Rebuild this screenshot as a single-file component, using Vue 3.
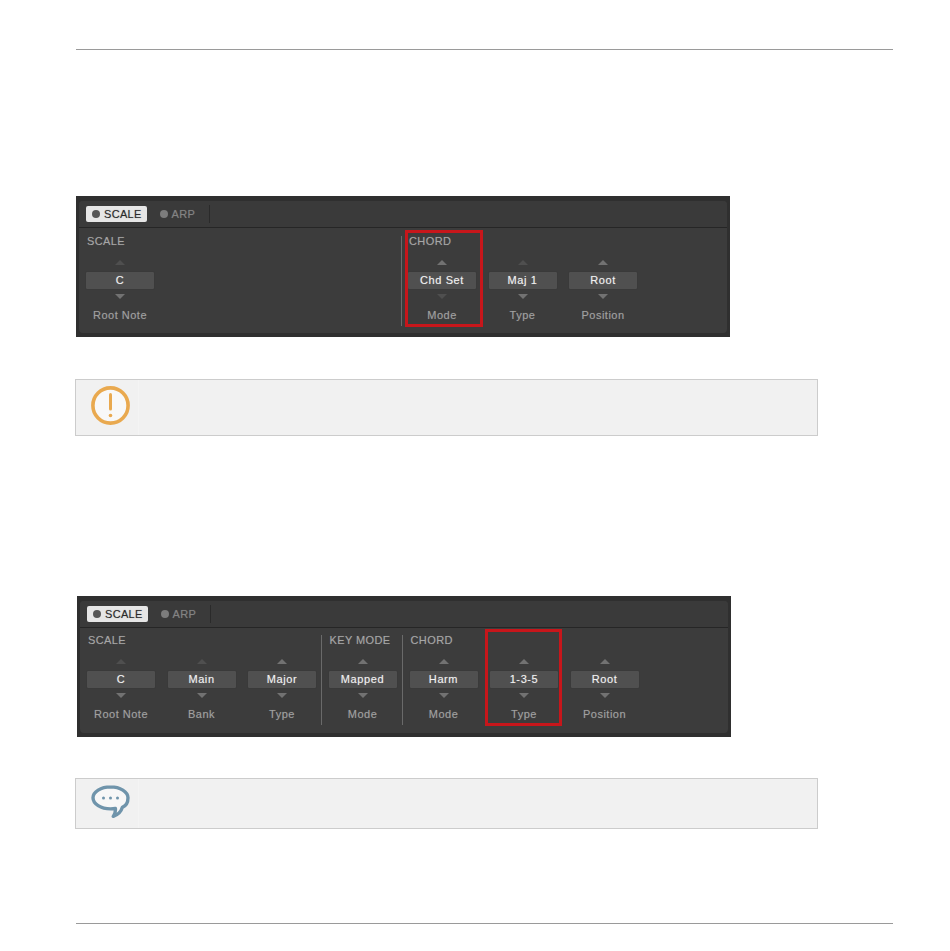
<template>
  <main class="page">
    <div class="rule"></div>

    <template v-for="(panel, i) in panels" :key="i">
      <section class="panel" :class="'panel-' + (i + 1)">
        <div class="panel-inner">
          <header class="tabs">
            <div class="tab active"><span class="dot"></span>SCALE</div>
            <div class="tab"><span class="dot"></span>ARP</div>
            <span class="tab-sep"></span>
          </header>
          <div class="groups">
            <div
              v-for="group in panel.groups"
              :key="group.title"
              class="group"
              :class="{ first: group.first }"
            >
              <h3 class="group-title">{{ group.title }}</h3>
              <div class="controls" :style="{ gridTemplateColumns: `repeat(${group.cols}, 68px)` }">
                <div v-for="c in group.controls" :key="c.label" class="control">
                  <span class="arrow up" :class="{ dim: c.dimUp }"></span>
                  <div class="value">{{ c.value }}</div>
                  <span class="arrow down" :class="{ dim: c.dimDown }"></span>
                  <div class="label">{{ c.label }}</div>
                </div>
              </div>
            </div>
          </div>
        </div>
        <div class="highlight"></div>
      </section>

      <aside class="note" :class="'note-' + (i + 1)">
        <div class="note-icon">
          <svg v-if="i === 0" width="39" height="39" viewBox="0 0 39 39">
            <circle cx="19.5" cy="19.5" r="17.6" fill="#f8f8f8" stroke="#e9a94f" stroke-width="3.6" />
            <path d="M19.5 8.5V23" fill="none" stroke="#e9a94f" stroke-width="3" stroke-linecap="round" />
            <circle cx="19.5" cy="29.5" r="1.8" fill="#e9a94f" />
          </svg>
          <svg v-else width="39" height="33" viewBox="0 0 39 33">
            <path
              d="M19.5 1.900C9.900 1.900 2 6.800 2 12.800c0 6.100 7.900 11.100 17.500 11.100 1.800 0 3.300-.1 4.900-.4.300 2.400-.4 5.100-2.100 7.800 4.700-1.600 7.800-4.400 9-8.900C36 20.500 37 16.800 37 12.800 37 6.800 29.100 1.900 19.500 1.900Z"
              fill="#f7f7f7"
              stroke="#6f94ab"
              stroke-width="3.4"
              stroke-linejoin="round"
            />
            <circle cx="12.500" cy="13" r="1.500" fill="#6f94ab" />
            <circle cx="19.500" cy="13" r="1.500" fill="#6f94ab" />
            <circle cx="26.500" cy="13" r="1.500" fill="#6f94ab" />
          </svg>
        </div>
      </aside>
    </template>

    <div class="rule rule-bottom"></div>
  </main>
</template>

<script setup>
const panels = [
  {
    groups: [
      {
        title: 'SCALE', cols: 4, first: true,
        controls: [{ value: 'C', label: 'Root Note', dimUp: true }]
      },
      {
        title: 'CHORD', cols: 3,
        controls: [
          { value: 'Chd Set', label: 'Mode', dimDown: true },
          { value: 'Maj 1', label: 'Type', dimUp: true },
          { value: 'Root', label: 'Position' }
        ]
      }
    ]
  },
  {
    groups: [
      {
        title: 'SCALE', cols: 3, first: true,
        controls: [
          { value: 'C', label: 'Root Note', dimUp: true },
          { value: 'Main', label: 'Bank', dimUp: true },
          { value: 'Major', label: 'Type' }
        ]
      },
      {
        title: 'KEY MODE', cols: 1,
        controls: [{ value: 'Mapped', label: 'Mode' }]
      },
      {
        title: 'CHORD', cols: 3,
        controls: [
          { value: 'Harm', label: 'Mode' },
          { value: '1-3-5', label: 'Type' },
          { value: 'Root', label: 'Position' }
        ]
      }
    ]
  }
]
</script>

<style scoped>
.page {
  width: 950px;
  height: 951px;
  box-sizing: border-box;
  padding: 49px 0 0 76px;
  font-family: "Liberation Sans", Arial, sans-serif;
  background: #fff;
}
.rule { width: 817px; height: 1px; background: #9a9a9a; }
.rule-bottom { margin-top: 94px; }

.panel {
  position: relative;
  width: 654px;
  height: 141px;
  box-sizing: border-box;
  margin-top: 146px;
  padding: 5px 3px 4px;
  background: #2f2f2f;
}
.panel-2 { margin-top: 160px; margin-left: 1px; }

.panel-inner {
  height: 100%;
  background: #3c3c3c;
  border-radius: 4px;
}
.tabs {
  display: flex;
  align-items: center;
  height: 27px;
  box-sizing: border-box;
  padding-left: 7px;
  padding-bottom: 1px;
  background: #3a3a3a;
  border-bottom: 1px solid #262626;
  border-radius: 4px 4px 0 0;
}
.tab {
  display: flex;
  align-items: center;
  gap: 4px;
  height: 16px;
  padding: 0 5px 0 6px;
  border-radius: 2px;
  font-size: 11px;
  letter-spacing: 0.3px;
  color: #838383;
  text-shadow: 0 0 1px rgba(131, 131, 131, 0.5);
}
.tab.active {
  margin-right: 7px;
  background: #e6e6e6;
  color: #2a2a2a;
  text-shadow: 0 0 1px rgba(42, 42, 42, 0.4);
}
.dot { width: 8px; height: 8px; border-radius: 50%; background: #7c7c7c; }
.tab.active .dot { background: #555; }
.tab-sep { width: 1px; height: 18px; margin-left: 9px; background: #2a2a2a; }

.groups { display: flex; padding: 8px 0 0 7px; }
.panel-2 .groups { padding-top: 7px; }
.group {
  box-sizing: border-box;
  min-height: 90px;
  padding: 0 5.5px 0 6.5px;
  border-left: 1px solid #6a6a6a;
}
.group.first { padding-left: 0; padding-right: 5px; border-left: none; }
.group-title {
  margin: 0 0 14px 1px;
  font-size: 11px;
  line-height: 10px;
  font-weight: normal;
  letter-spacing: 0.4px;
  color: #a6a6a6;
  text-shadow: 0 0 1px rgba(166, 166, 166, 0.4);
}
.controls { display: grid; column-gap: 12.5px; }
.control { display: flex; flex-direction: column; align-items: center; }
.value {
  width: 100%;
  height: 17px;
  margin: 7px 0 5px;
  background: #505050;
  border-radius: 1px;
  box-shadow: 0 0 1px #2c2c2c;
  text-align: center;
  font-size: 11px;
  line-height: 17px;
  letter-spacing: 0.6px;
  color: #f0f0f0;
  text-shadow: 0 0 1px rgba(240, 240, 240, 0.45);
}
.arrow {
  width: 0;
  height: 0;
  border-left: 5px solid transparent;
  border-right: 5px solid transparent;
}
.arrow.up { border-bottom: 5px solid #727272; }
.arrow.down { border-top: 5px solid #727272; }
.arrow.up.dim { border-bottom-color: #4f4f4f; }
.arrow.down.dim { border-top-color: #4f4f4f; }
.label {
  margin-top: 9px;
  font-size: 11px;
  line-height: 14px;
  letter-spacing: 0.5px;
  color: #a0a0a0;
  text-shadow: 0 0 1px rgba(160, 160, 160, 0.4);
}

.highlight {
  position: absolute;
  box-sizing: border-box;
  border: 3px solid #c7161b;
}
.panel-1 .highlight { left: 329px; top: 34px; width: 78px; height: 97px; }
.panel-2 .highlight { left: 408px; top: 33px; width: 77px; height: 97px; }

.note {
  box-sizing: border-box;
  width: 743px;
  margin-top: 42px;
  margin-left: -1px;
  background: #f1f1f1;
  border: 1px solid #cccccc;
}
.note-1 { height: 57px; }
.note-2 { height: 51px; margin-top: 41px; }
.note-icon {
  box-sizing: border-box;
  width: 63px;
  height: 100%;
  padding: 6px 0 0 15px;
  border-right: 1px solid #f4f4f4;
}
.note-icon svg { display: block; }
</style>
